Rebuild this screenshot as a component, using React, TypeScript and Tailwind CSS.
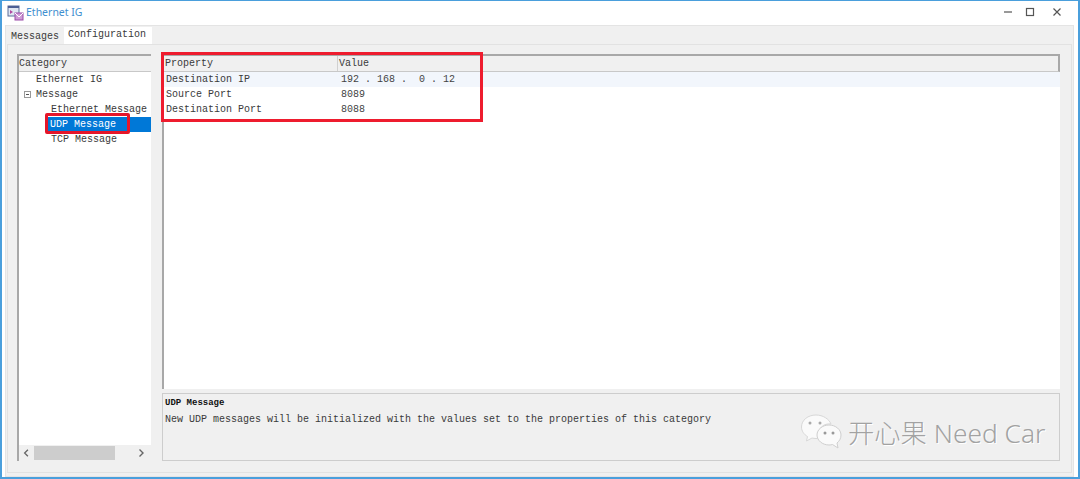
import React from "react";

const mono = "font-['Liberation_Mono','DejaVu_Sans_Mono',monospace]";

function Row({ name, value, shade }: { name: string; value: string; shade?: boolean }) {
  return (
    <div className={`flex h-[15px] items-center text-[10px] leading-[15px] text-[#3a3a3a] ${shade ? "bg-[#f2f6fc]" : ""}`}>
      <div className="w-[175px] shrink-0 pl-[2px]">{name}</div>
      <div className="whitespace-pre pl-[2px] text-[#444]">{value}</div>
    </div>
  );
}

function TreeRow({ label, indent, selected, box }: { label: string; indent: string; selected?: boolean; box?: boolean }) {
  return (
    <div className={`relative flex h-[15px] items-center whitespace-nowrap text-[10px] leading-[15px] ${indent} ${selected ? "ml-[29px] bg-[#0078d7] pl-[2px] text-white" : "text-[#3a3a3a]"}`}>
      {box && (
        <span className="absolute left-[5px] top-[4px] flex h-[7px] w-[7px] items-center justify-center border border-[#999]">
          <span className="h-px w-[3px] bg-[#555]" />
        </span>
      )}
      {label}
    </div>
  );
}

function WeChat() {
  return (
    <svg width="42" height="36" viewBox="0 0 42 36" className="mb-[2px] shrink-0">
      <path d="M16 1C8 1 1.500 6 1.500 13c0 4 2.500 7.500 6 9.500L6.500 27l5.500-3c1.300.3 2.600.5 4 .5 1 0 2 0 3-.3C17 14 24 9 31 10 29 5 23 1 16 1z" fill="#fafafa" stroke="#d8d8d8" strokeWidth="1" />
      <path d="M29 11c-6.500 0-12 4.500-12 10s5.500 10 12 10c1.300 0 2.400-.2 3.500-.5L38 34l-1-5c2.500-2 4-4.700 4-8 0-5.500-5.500-10-12-10z" fill="#fafafa" stroke="#cfcfcf" strokeWidth="1" />
      <circle cx="10" cy="9" r="1.500" fill="#aaa" />
      <circle cx="20" cy="9" r="1.500" fill="#aaa" />
      <circle cx="25" cy="19" r="1.500" fill="#999" />
      <circle cx="33" cy="19" r="1.500" fill="#999" />
    </svg>
  );
}

export default function App() {
  return (
    <div className={`relative flex h-[479px] w-[1080px] flex-col overflow-hidden border-x-2 border-b-2 border-t border-[#4a9fdc] bg-white ${mono}`}>
      {/* title bar */}
      <div className="flex h-[24px] shrink-0 items-center bg-white pl-[5px] pr-[16px]">
        <svg width="17" height="16" viewBox="0 0 17 16" className="shrink-0">
          <rect x="1" y="1" width="11" height="10" fill="#dfe6f2" stroke="#5b6c9a" />
          <rect x="1" y="1" width="11" height="2" fill="#4c5f95" />
          <path d="M3 5l3 2-3 2z" fill="#b0479f" />
          <rect x="8" y="8" width="8" height="7" fill="#cf9ad6" stroke="#9a4aa8" />
          <path d="M8 8l4 4 4-4" fill="none" stroke="#fff" />
        </svg>
        <span className="ml-[2px] font-['Noto_Sans',sans-serif] text-[10.500px] text-[#3f8fd0]">Ethernet IG</span>
        <div className="mb-[2px] ml-auto flex items-center">
          <svg width="10" height="10" viewBox="0 0 10 10" className="mr-[12px]"><path d="M1 5h8" stroke="#555" strokeWidth="1.200" /></svg>
          <svg width="10" height="10" viewBox="0 0 10 10" className="mr-[17px]"><rect x="1.500" y="1.500" width="7" height="7" fill="none" stroke="#555" strokeWidth="1.200" /></svg>
          <svg width="10" height="10" viewBox="0 0 10 10"><path d="M1.500 1.500l7 7M8.500 1.500l-7 7" stroke="#555" strokeWidth="1.200" /></svg>
        </div>
      </div>

      {/* tab strip and outer frame */}
      <div className="ml-[3px] mr-[4px] flex min-h-0 flex-1 flex-col border border-[#e4e4e4] bg-[#f0f0f0] px-[1px] pb-[3px]">
        <div className="flex h-[18px] shrink-0 items-end">
          <div className="flex h-[16px] w-[57px] items-center pl-[4px] text-[10px] text-[#3a3a3a]">Messages</div>
          <div className="-mb-px flex h-[18px] w-[88px] items-center bg-white pb-[3px] pl-[4px] text-[10px] text-[#3a3a3a]">Configuration</div>
        </div>
        <div className="flex min-h-0 flex-1 gap-[11px] border border-[#e2e2e2] bg-[#f0f0f0] pb-[11px] pl-[9px] pr-[11px] pt-[9px]">
          {/* left: category */}
          <div className="flex w-[134px] shrink-0 flex-col border-l-2 border-t-2 border-[#a8a8a8]">
            <div className="flex h-[16px] shrink-0 items-center border-b border-[#c8c8c8] bg-[#f0f0f0] text-[10px] text-[#3a3a3a]">Category</div>
            <div className="flex-1 overflow-hidden bg-white">
              <TreeRow label="Ethernet IG" indent="pl-[17px]" />
              <TreeRow label="Message" indent="pl-[17px]" box />
              <TreeRow label="Ethernet Message" indent="pl-[32px]" />
              <TreeRow label="UDP Message" indent="" selected />
              <TreeRow label="TCP Message" indent="pl-[32px]" />
            </div>
            <div className="flex h-[16px] shrink-0 items-center bg-[#f0f0f0]">
              <svg width="15" height="16" viewBox="0 0 16 16" className="shrink-0"><path d="M9.500 4.500 6 8l3.500 3.500" fill="none" stroke="#666" strokeWidth="1.400" /></svg>
              <div className="h-[14px] w-[81px] bg-[#cdcdcd]" />
              <div className="flex-1" />
              <svg width="16" height="16" viewBox="0 0 16 16" className="mr-[2px] shrink-0"><path d="M6.500 4.500 10 8l-3.500 3.500" fill="none" stroke="#666" strokeWidth="1.400" /></svg>
            </div>
          </div>

          {/* right */}
          <div className="flex min-w-0 flex-1 flex-col gap-[4px]">
            <div className="flex min-h-0 flex-1 flex-col border-l-2 border-t-2 border-[#a8a8a8] bg-white">
              <div className="flex h-[16px] shrink-0 items-center border-b border-[#c8c8c8] border-r-2 border-r-[#a8a8a8] bg-[#f0f0f0] text-[10px] text-[#3a3a3a]">
                <div className="flex h-full w-[174px] items-center border-r border-[#d0d0d0] pl-[1px]">Property</div>
                <div className="pl-[1px]">Value</div>
              </div>
              <Row name="Destination IP" value="192 . 168 .  0 . 12" shade />
              <Row name="Source Port" value="8089" />
              <Row name="Destination Port" value="8088" />
            </div>
            <div className="flex h-[68px] shrink-0 flex-col border border-[#cdcdcd] bg-[#f0f0f0] pl-[2px] pt-[2px] text-[10px] text-[#3a3a3a]">
              <div className="h-[13px] text-[9px] font-bold leading-[14px] text-[#111]">UDP Message</div>
              <div className="mt-[3px] leading-[15px]">New UDP messages will be initialized with the values set to the properties of this category</div>
            </div>
          </div>
        </div>
      </div>

      {/* red annotation boxes */}
      <div className="pointer-events-none absolute left-[159px] top-[51px] h-[70px] w-[322px] border-[3px] border-[#ee1c2e]" />
      <div className="pointer-events-none absolute left-[43px] top-[112px] h-[21px] w-[85px] rounded-[2px] border-[3px] border-[#e5162a]" />

      {/* watermark */}
      <div className="pointer-events-none absolute left-[798px] top-[413px] flex items-center gap-[6px]">
        <WeChat />
        <span className="font-['Noto_Sans','Noto_Sans_CJK_SC',sans-serif] text-[26.300px] font-light leading-none text-[#a2a2a2] [text-shadow:1px_1px_0_#ffffff]">开心果 Need Car</span>
      </div>
    </div>
  );
}
